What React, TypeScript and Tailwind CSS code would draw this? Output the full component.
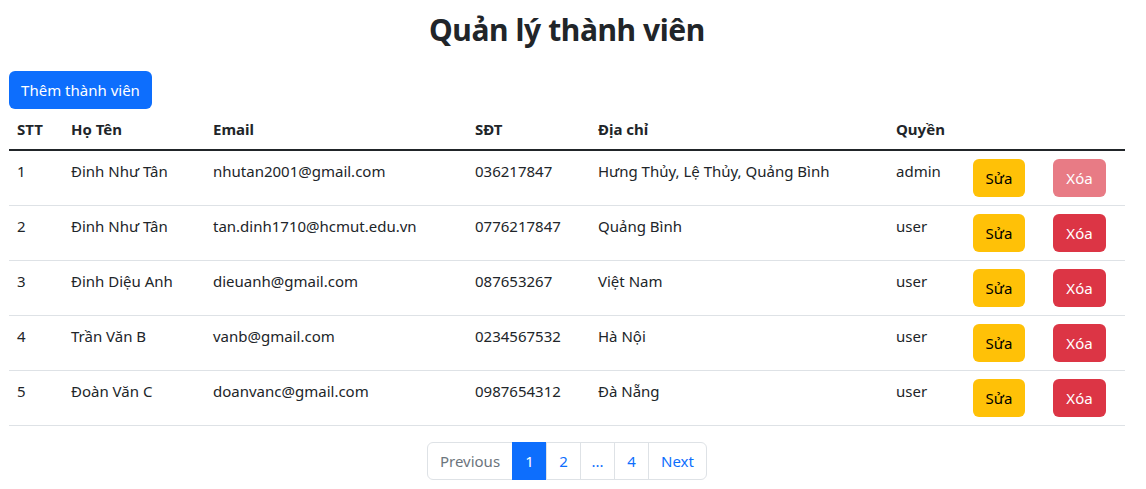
import React from "react";

const rows = [
  { stt: 1, name: "Đinh Như Tân", email: "nhutan2001@gmail.com", phone: "036217847", addr: "Hưng Thủy, Lệ Thủy, Quảng Bình", role: "admin", disabled: true },
  { stt: 2, name: "Đinh Như Tân", email: "tan.dinh1710@hcmut.edu.vn", phone: "0776217847", addr: "Quảng Bình", role: "user", disabled: false },
  { stt: 3, name: "Đinh Diệu Anh", email: "dieuanh@gmail.com", phone: "087653267", addr: "Việt Nam", role: "user", disabled: false },
  { stt: 4, name: "Trần Văn B", email: "vanb@gmail.com", phone: "0234567532", addr: "Hà Nội", role: "user", disabled: false },
  { stt: 5, name: "Đoàn Văn C", email: "doanvanc@gmail.com", phone: "0987654312", addr: "Đà Nẵng", role: "user", disabled: false },
];

export default function App() {
  return (
    <div
      className="w-[1146px] h-[489px] bg-white text-[#212529] px-[9px] overflow-hidden"
      style={{ fontFamily: '"Noto Sans", "Open Sans", sans-serif' }}
    >
      <h1 className="w-[1116px] text-[30px] leading-[38px] font-bold text-center tracking-[-0.4px] pt-[11px] mb-[22px]">Quản lý thành viên</h1>
      <button className="h-[38px] w-[143px] rounded-[6px] bg-[#0d6efd] text-white text-[15px] leading-[24px]">
        Thêm thành viên
      </button>
      <table className="w-[1116px] table-fixed border-collapse text-[15px] leading-[24px]">
        <colgroup>
          <col className="w-[54px]" />
          <col className="w-[142px]" />
          <col className="w-[262px]" />
          <col className="w-[123px]" />
          <col className="w-[298px]" />
          <col className="w-[77px]" />
          <col className="w-[80px]" />
          <col className="w-[80px]" />
        </colgroup>
        <thead>
          <tr className="border-b-2 border-[#212529]">
            {["STT", "Họ Tên", "Email", "SĐT", "Địa chỉ", "Quyền", "", ""].map((h, i) => (
              <th key={i} className="text-left font-bold p-[8px] align-bottom">{h}</th>
            ))}
          </tr>
        </thead>
        <tbody>
          {rows.map((r) => (
            <tr key={r.stt} className="border-b border-[#dee2e6]">
              <td className="p-[8px] align-top">{r.stt}</td>
              <td className="p-[8px] align-top">{r.name}</td>
              <td className="p-[8px] align-top">{r.email}</td>
              <td className="p-[8px] align-top">{r.phone}</td>
              <td className="p-[8px] align-top">{r.addr}</td>
              <td className="p-[8px] align-top">{r.role}</td>
              <td className="p-[8px] align-top">
                <button className="h-[38px] w-[52px] rounded-[6px] bg-[#ffc107] text-black">Sửa</button>
              </td>
              <td className="p-[8px] align-top">
                <button
                  className={
                    r.disabled
                      ? "h-[38px] w-[53px] rounded-[6px] bg-[#dc3545] text-white opacity-65"
                      : "h-[38px] w-[53px] rounded-[6px] bg-[#dc3545] text-white"
                  }
                >
                  Xóa
                </button>
              </td>
            </tr>
          ))}
        </tbody>
      </table>
      <div className="flex justify-center mt-[16px] w-[1116px]">
        <div className="flex h-[38px] text-[15px] leading-[24px]">
          <span className="flex items-center justify-center w-[86px] border border-[#dee2e6] rounded-l-[6px] text-[#6c757d]">Previous</span>
          <span className="flex items-center justify-center w-[35px] border border-[#0d6efd] bg-[#0d6efd] text-white -ml-px">1</span>
          <span className="flex items-center justify-center w-[35px] border border-[#dee2e6] text-[#0d6efd] -ml-px">2</span>
          <span className="flex items-center justify-center w-[35px] border border-[#dee2e6] text-[#0d6efd] -ml-px">...</span>
          <span className="flex items-center justify-center w-[35px] border border-[#dee2e6] text-[#0d6efd] -ml-px">4</span>
          <span className="flex items-center justify-center w-[59px] border border-[#dee2e6] rounded-r-[6px] text-[#0d6efd] -ml-px">Next</span>
        </div>
      </div>
    </div>
  );
}
